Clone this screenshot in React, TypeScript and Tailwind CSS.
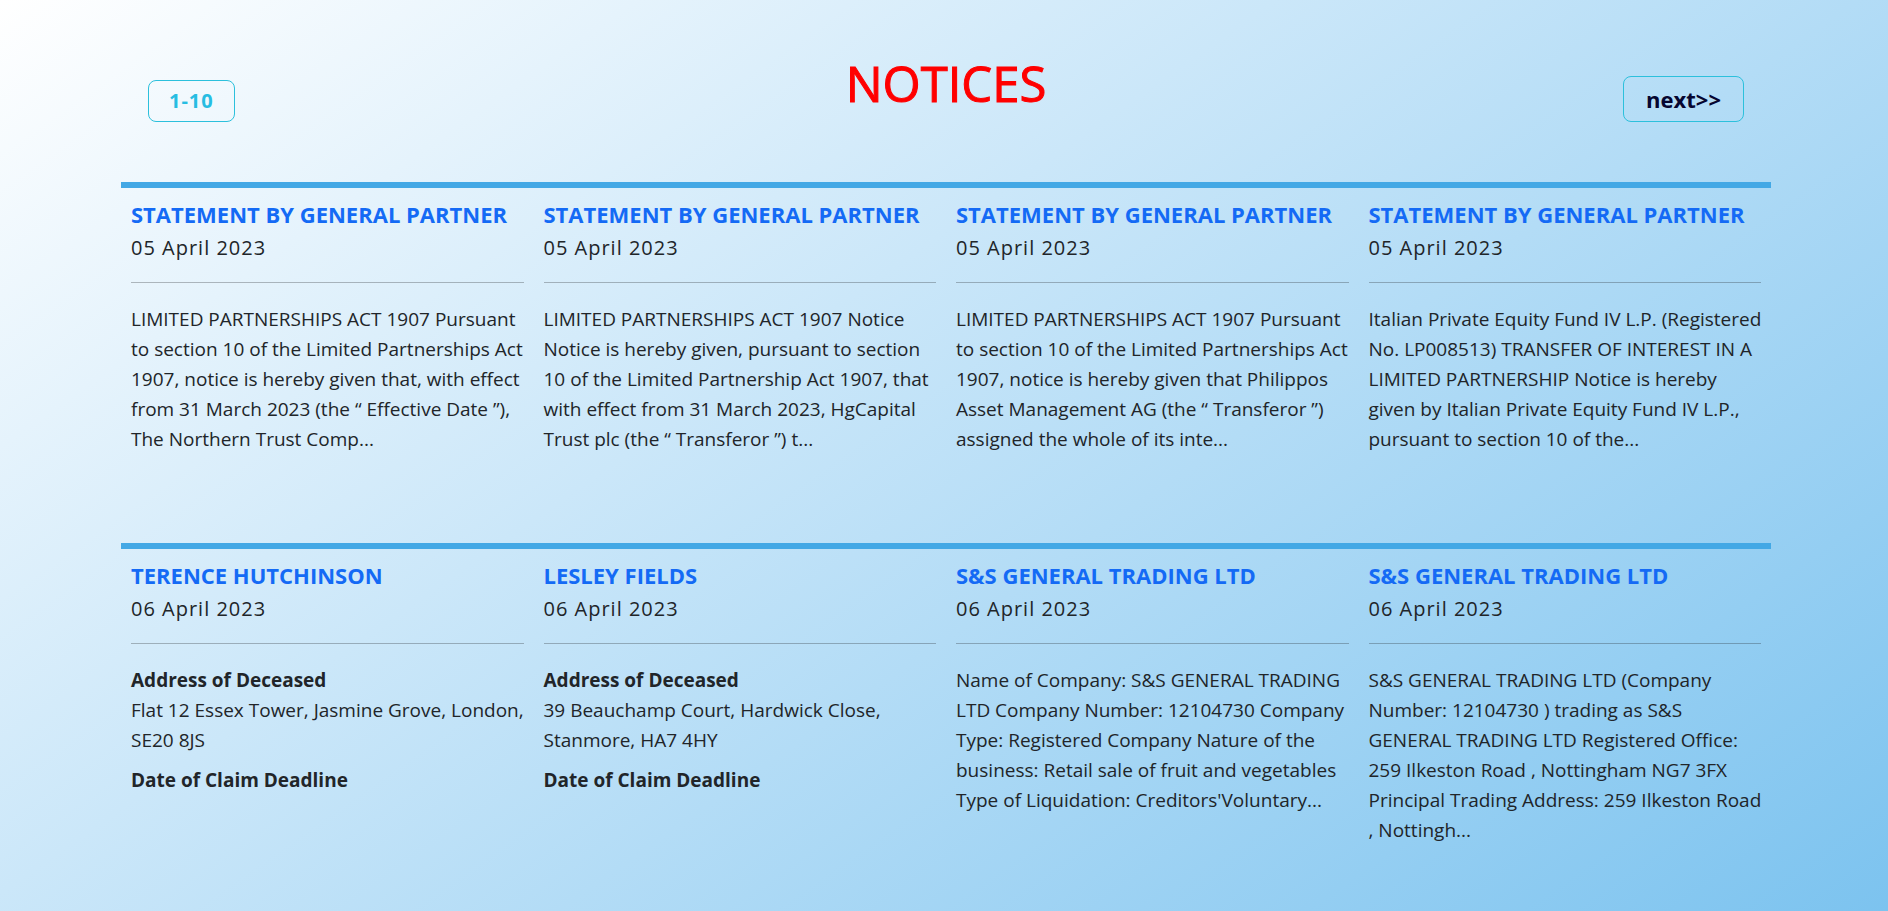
interface Notice {
  title: string;
  date: string;
  text?: string;
  address?: string;
}

const act = 'LIMITED PARTNERSHIPS ACT 1907';
const statement = 'STATEMENT BY GENERAL PARTNER';

const rows: Notice[][] = [
  [
    { title: statement, date: '05 April 2023', text: `${act} Pursuant to section 10 of the Limited Partnerships Act 1907, notice is hereby given that, with effect from 31 March 2023 (the “ Effective Date ”), The Northern Trust Comp...` },
    { title: statement, date: '05 April 2023', text: `${act} Notice Notice is hereby given, pursuant to section 10 of the Limited Partnership Act 1907, that with effect from 31 March 2023, HgCapital Trust plc (the “ Transferor ”) t...` },
    { title: statement, date: '05 April 2023', text: `${act} Pursuant to section 10 of the Limited Partnerships Act 1907, notice is hereby given that Philippos Asset Management AG (the “ Transferor ”) assigned the whole of its inte...` },
    { title: statement, date: '05 April 2023', text: 'Italian Private Equity Fund IV L.P. (Registered No. LP008513) TRANSFER OF INTEREST IN A LIMITED PARTNERSHIP Notice is hereby given by Italian Private Equity Fund IV L.P., pursuant to section 10 of the...' },
  ],
  [
    { title: 'TERENCE HUTCHINSON', date: '06 April 2023', address: 'Flat 12 Essex Tower, Jasmine Grove, London, SE20 8JS' },
    { title: 'LESLEY FIELDS', date: '06 April 2023', address: '39 Beauchamp Court, Hardwick Close, Stanmore, HA7 4HY' },
    { title: 'S&S GENERAL TRADING LTD', date: '06 April 2023', text: "Name of Company: S&S GENERAL TRADING LTD Company Number: 12104730 Company Type: Registered Company Nature of the business: Retail sale of fruit and vegetables Type of Liquidation: Creditors'Voluntary..." },
    { title: 'S&S GENERAL TRADING LTD', date: '06 April 2023', text: 'S&S GENERAL TRADING LTD (Company Number: 12104730 ) trading as S&S GENERAL TRADING LTD Registered Office: 259 Ilkeston Road , Nottingham NG7 3FX Principal Trading Address: 259 Ilkeston Road , Nottingh...' },
  ],
];

function NoticeCard({ notice }: { notice: Notice }) {
  return (
    <article className="min-w-0 pr-1 pl-[10px]">
      <h2 className="pt-[11px] text-[22px] leading-[30px] font-bold text-[#146af5]">
        <a href="#notice">{notice.title}</a>
      </h2>
      <p className="pt-1 text-[20px] leading-[30px] tracking-[1px]">{notice.date}</p>
      <hr className="mt-[19px] mr-[6px] mb-[21px] border-t border-[#212529]/30" />
      {notice.text ? (
        <p>{notice.text}</p>
      ) : (
        <dl>
          <dt className="font-bold">Address of Deceased</dt>
          <dd className="pb-[10px]">{notice.address}</dd>
          <dt className="font-bold">Date of Claim Deadline</dt>
        </dl>
      )}
    </article>
  );
}

export default function App() {
  return (
    <main className="min-h-screen bg-linear-[145deg,#ffffff,#cbe7f9_40%,#7cc3ef] pr-[117px] pl-[121px] font-['Open_Sans','Noto_Sans',sans-serif] text-[19px] leading-[30px] text-[#212529]">
      <header className="grid grid-cols-3 items-end px-[27px] pt-[46px] pb-[60px]">
        <div className="flex">
          <button type="button" className="h-[42px] rounded-lg border border-[#2cc0dc] px-5 text-xl font-bold tracking-[1px] text-[#27bde2]">1-10</button>
        </div>
        <h1 className="pb-[2px] text-center text-[49px] leading-[74px] font-medium text-[#ff0000] [-webkit-text-stroke:1px_#ff0000]">NOTICES</h1>
        <div className="flex justify-end">
          <button type="button" className="h-[46px] rounded-lg border border-[#2cc0dc] px-[22px] text-[22px] font-bold text-[#060630]">next&gt;&gt;</button>
        </div>
      </header>
      {rows.map((row, i) => (
        <section key={i} className="grid min-h-[361px] grid-cols-4 content-start">
          <div className="col-span-4 h-[6px] bg-[#43a8e5]" />
          {row.map((notice, j) => (
            <NoticeCard key={j} notice={notice} />
          ))}
        </section>
      ))}
    </main>
  );
}
